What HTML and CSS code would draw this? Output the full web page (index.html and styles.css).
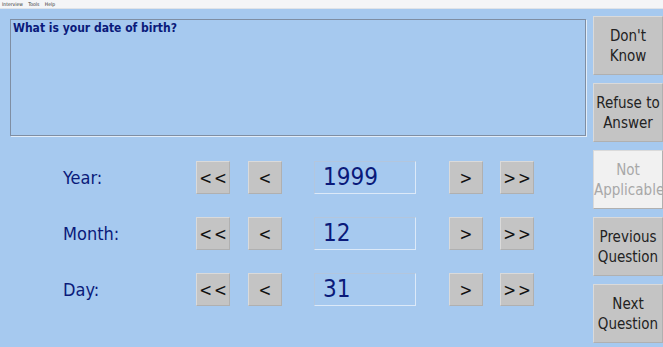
FILE: index.html
```html
<!DOCTYPE html>
<html lang="en">

<head>
    <meta charset="UTF-8">
    <meta name="viewport" content="width=device-width, initial-scale=1.0">
    <title>Date of Birth</title>
    <link rel="stylesheet" href="styles.css">
</head>

<body>

    <div class="menubar">
        <span>Interview</span>
        <span>Tools</span>
        <span>Help</span>
    </div>

    <div class="main">

        <!-- Frage und Eingabe -->
        <div class="question-area">
            <div class="question-box">What is your date of birth?</div>

            <div class="date-rows">
                <div class="date-row">
                    <span class="date-label">Year:</span>
                    <button class="step step-first">&lt;&lt;</button>
                    <button class="step step-second">&lt;</button>
                    <div class="date-value">1999</div>
                    <button class="step step-third">&gt;</button>
                    <button class="step step-fourth">&gt;&gt;</button>
                </div>
                <div class="date-row">
                    <span class="date-label">Month:</span>
                    <button class="step step-first">&lt;&lt;</button>
                    <button class="step step-second">&lt;</button>
                    <div class="date-value">12</div>
                    <button class="step step-third">&gt;</button>
                    <button class="step step-fourth">&gt;&gt;</button>
                </div>
                <div class="date-row">
                    <span class="date-label">Day:</span>
                    <button class="step step-first">&lt;&lt;</button>
                    <button class="step step-second">&lt;</button>
                    <div class="date-value">31</div>
                    <button class="step step-third">&gt;</button>
                    <button class="step step-fourth">&gt;&gt;</button>
                </div>
            </div>
        </div>

        <!-- Seitenleiste -->
        <div class="side-buttons">
            <button class="side-button">Don't<br>Know</button>
            <button class="side-button">Refuse to<br>Answer</button>
            <button class="side-button disabled">Not<br>Applicable</button>
            <button class="side-button">Previous<br>Question</button>
            <button class="side-button">Next<br>Question</button>
        </div>

    </div>

</body>

</html>
```

FILE: styles.css
```css
body {
    margin: 0;
    height: 347px;
    overflow: hidden;
    background-color: #a6c9ef;
    font-family: "DejaVu Sans Condensed", "DejaVu Sans", sans-serif;
}

.menubar {
    height: 9px;
    background-color: #f4f5f7;
    border-bottom: 1px solid #dfe3e8;
    box-sizing: border-box;
    font-size: 5px;
    line-height: 8px;
    padding-left: 2px;
    color: #333;
}

.menubar span {
    margin-right: 4px;
}

.main {
    display: flex;
    padding-left: 10px;
}

.question-area {
    width: 576px;
}

.question-box {
    margin-top: 10px;
    height: 117px;
    box-sizing: border-box;
    border: 1px solid #7f8ea3;
    box-shadow: 1px 1px 0 #e2edf9;
    padding: 1px 2px;
    color: #0a1a7a;
    font-weight: bold;
    font-size: 12px;
}

.date-rows {
    margin-top: 25px;
    display: flex;
    flex-direction: column;
    gap: 23px;
}

.date-row {
    display: flex;
    align-items: center;
    height: 33px;
    padding-left: 53px;
}

.date-label {
    width: 133px;
    color: #0a1a7a;
    font-size: 18px;
}

.step {
    width: 34px;
    height: 33px;
    padding: 0;
    background-color: #c4c4c4;
    border: 1px solid #dadada;
    border-right-color: #b0b0b0;
    border-bottom-color: #b0b0b0;
    font-family: "DejaVu Sans Condensed", "DejaVu Sans", sans-serif;
    font-size: 17px;
    letter-spacing: 2px;
    padding-left: 2px;
    color: #111;
}

.step-second {
    margin-left: 18px;
}

.date-value {
    width: 102px;
    height: 33px;
    margin-left: 32px;
    box-sizing: border-box;
    border: 1px solid #b3c6dd;
    border-right-color: #dce9f8;
    border-bottom-color: #dce9f8;
    padding-left: 8px;
    color: #0a1a7a;
    font-size: 24px;
    line-height: 30px;
}

.step-third {
    margin-left: 33px;
}

.step-fourth {
    margin-left: 17px;
}

.side-buttons {
    margin-left: 7px;
    padding-top: 7px;
    display: flex;
    flex-direction: column;
    gap: 8px;
}

.side-button {
    width: 70px;
    height: 59px;
    padding: 0;
    background-color: #c4c4c4;
    border: 1px solid #dadada;
    border-right-color: #b0b0b0;
    border-bottom-color: #b0b0b0;
    font-family: "DejaVu Sans Condensed", "DejaVu Sans", sans-serif;
    font-size: 15px;
    line-height: 20px;
    color: #222;
}

.side-button.disabled {
    background-color: #f1f1f1;
    color: #a8a8a8;
}
```
